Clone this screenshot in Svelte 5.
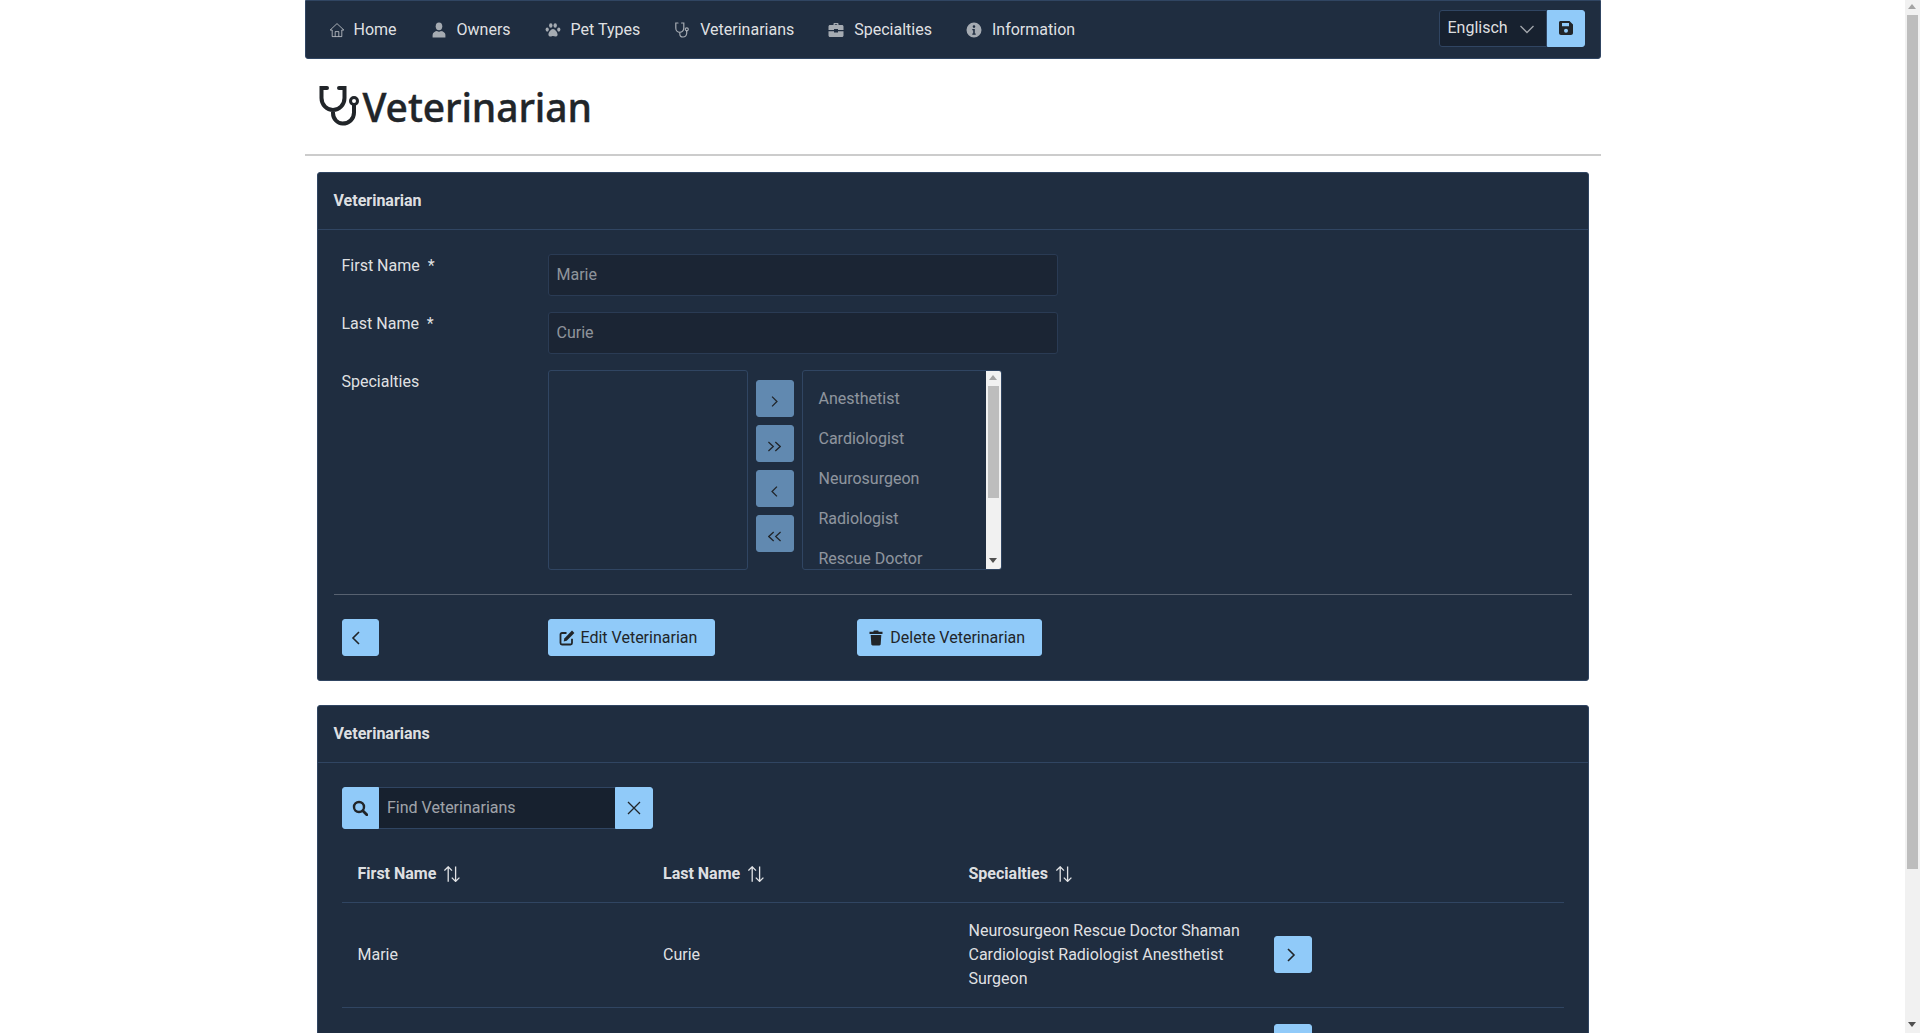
<script>
  const icons = {
    home: '<path d="M8 1.6 1.2 8h2v6.6h9.6V8h2z" fill="none" stroke="currentColor"/><path d="M6.2 14.4V9.6h3.6v4.8" fill="none" stroke="currentColor"/>',
    user: '<ellipse cx="8" cy="4.3" rx="3.3" ry="3.9" fill="currentColor"/><path d="M1.6 15.5v-2.6c0-2.2 2.6-3.6 4.4-3.8.6.5 1.2.7 2 .7s1.4-.2 2-.7c1.8.2 4.4 1.6 4.4 3.8v2.6z" fill="currentColor"/>',
    paw: '<g fill="currentColor"><ellipse cx="5.8" cy="3.5" rx="1.7" ry="2.3"/><ellipse cx="10.2" cy="3.5" rx="1.7" ry="2.3"/><ellipse cx="2.2" cy="7.6" rx="1.6" ry="2.1"/><ellipse cx="13.8" cy="7.6" rx="1.6" ry="2.1"/><path d="M8 7c2 0 4.600 3.400 4.600 5.600 0 1.400-1 2-2.100 2-1 0-1.600-.5-2.500-.5s-1.500.5-2.500.5c-1.100 0-2.100-.6-2.100-2C3.400 10.400 6 7 8 7z"/></g>',
    steth: '<path d="M4 1H1.800v5c0 2.500 1.800 4.400 4 4.400s4-1.900 4-4.400V1H7.600M5.800 10.400v1.300c0 1.900 1.500 3.300 3.200 3.300s3.400-1.400 3.700-3.500V9" fill="none" stroke="currentColor" stroke-width="1.200" stroke-linecap="round"/><circle cx="12.800" cy="7.300" r="1.500" fill="none" stroke="currentColor" stroke-width="1.200"/>',
    case: '<path fill="currentColor" d="M5.500 3V1.800c0-.5.400-.8.800-.8h3.400c.4 0 .8.300.8.800V3h3.500c.8 0 1.500.700 1.500 1.500V8H10V7H6v1H.5V4.500C.5 3.700 1.200 3 2 3zm1.300 0h2.400V2.300H6.800zM.5 9.200H6v1.300h4V9.200h5.500v4.300c0 .8-.7 1.500-1.500 1.500H2c-.8 0-1.500-.7-1.500-1.500z"/>',
    info: '<path fill="currentColor" fill-rule="evenodd" d="M8 .5a7.500 7.500 0 1 1 0 15 7.500 7.500 0 0 1 0-15zM8 3.300a1.300 1.300 0 1 0 0 2.600 1.300 1.300 0 0 0 0-2.600zM6.300 7v1.300h.9v3.300h-.9v1.200h3.400v-1.200h-.9V7z"/>',
    save: '<path fill="currentColor" fill-rule="evenodd" d="M2.500 1H11.500L15 4.500V13c0 1.100-.9 2-2 2H3c-1.100 0-2-.9-2-2V2.500C1 1.700 1.700 1 2.500 1zM4 3v3.200h7V3zM8 8.800a2 2 0 1 0 0 4 2 2 0 0 0 0-4z"/>',
    edit: '<path fill="none" stroke="currentColor" stroke-width="1.800" d="M7.500 3H3c-.9 0-1.500.6-1.500 1.500V13c0 .9.600 1.500 1.500 1.500h8.500c.9 0 1.500-.6 1.500-1.500V8.800"/><path fill="currentColor" d="M13 .6l2.400 2.400-7.700 7.800-3 .6.600-3z"/>',
    trash: '<path fill="currentColor" d="M5.800.4h4.400l.5 1.400H14.500v2.200h-13V1.800h3.800zM2.700 5h10.600l-.6 9.300c-.1.700-.6 1.200-1.300 1.200H4.600c-.7 0-1.200-.5-1.300-1.200z"/>',
    search: '<circle cx="7" cy="7" r="5" fill="none" stroke="currentColor" stroke-width="2.400"/><path d="M10.800 10.800l4 4" stroke="currentColor" stroke-width="2.800" stroke-linecap="round"/>',
    times: '<path d="M2 2l12 12M14 2 2 14" stroke="currentColor" stroke-width="1.300" fill="none"/>',
    sort: '<path d="M4.200 15.800V.8M.4 4.600 4.200.8 8 4.600M11.600.4v15M7.800 11.600l3.800 3.800 3.800-3.800" stroke="currentColor" stroke-width="1.300" fill="none"/>',
    down: '<path d="M1.500 5 8 11.500 14.500 5" stroke="currentColor" stroke-width="1.300" fill="none"/>',
    right: '<path d="M5 2l6 6-6 6" stroke="currentColor" stroke-width="1.600" fill="none"/>',
    left: '<path d="M11 2 5 8l6 6" stroke="currentColor" stroke-width="1.600" fill="none"/>',
    right2: '<path d="M.5 2.500l6 5.500-6 5.500M9 2.500l6 5.500-6 5.500" stroke="currentColor" stroke-width="1.600" fill="none"/>',
    left2: '<path d="M7 2.500 1 8l6 5.500M15.500 2.500 9.500 8l6 5.500" stroke="currentColor" stroke-width="1.600" fill="none"/>'
  };

  const navItems = [
    { icon: 'home', label: 'Home' },
    { icon: 'user', label: 'Owners' },
    { icon: 'paw', label: 'Pet Types' },
    { icon: 'steth', label: 'Veterinarians' },
    { icon: 'case', label: 'Specialties' },
    { icon: 'info', label: 'Information' }
  ];

  const specialties = ['Anesthetist', 'Cardiologist', 'Neurosurgeon', 'Radiologist', 'Rescue Doctor', 'Shaman', 'Surgeon'];
</script>

{#snippet icon(name, cls = '')}
  <svg class="icon {cls}" viewBox="0 0 16 16" aria-hidden="true">{@html icons[name]}</svg>
{/snippet}

{#snippet scrollbar(thumb)}
  <div class="scrollbar" aria-hidden="true">
    <span class="scrollbar__arrow scrollbar__arrow--up"></span>
    <span class="scrollbar__thumb" style="height: {thumb}px"></span>
    <span class="scrollbar__rest"></span>
    <span class="scrollbar__arrow scrollbar__arrow--down"></span>
  </div>
{/snippet}

<div class="shell">
  <div class="page">
    <nav class="menubar">
      <ul class="menu">
        {#each navItems as item}
          <li class="menu__item">
            {@render icon(item.icon)}
            <span>{item.label}</span>
          </li>
        {/each}
      </ul>
      <div class="lang">
        <div class="lang__select">
          <span>Englisch</span>
          {@render icon('down')}
        </div>
        <button class="btn lang__save" type="button">{@render icon('save')}</button>
      </div>
    </nav>

    <header class="title">
      <svg class="title__icon" viewBox="0 0 42 40" aria-hidden="true">
        <path d="M8 2H2.500v10c0 7 5.500 12 11.500 12s11.500-5 11.500-12V2H20M14 24v3c0 6 4.500 10.500 9.500 10.500 6.500 0 11.500-4.500 11.500-11V19" fill="none" stroke="currentColor" stroke-width="4" stroke-linecap="round"/>
        <circle cx="35" cy="15" r="3.500" fill="none" stroke="currentColor" stroke-width="3"/>
      </svg>
      <h1>Veterinarian</h1>
    </header>

    <section class="card">
      <h2 class="card__title">Veterinarian</h2>
      <div class="card__body">
        <div class="field">
          <label class="field__label" for="first">First Name&nbsp; *</label>
          <input id="first" class="input" value="Marie" disabled />
        </div>
        <div class="field">
          <label class="field__label" for="last">Last Name&nbsp; *</label>
          <input id="last" class="input" value="Curie" disabled />
        </div>
        <div class="field">
          <span class="field__label">Specialties</span>
          <div class="picklist">
            <div class="listbox"></div>
            <div class="picklist__btns">
              {#each ['right', 'right2', 'left', 'left2'] as dir}
                <button class="btn btn--disabled" type="button" disabled>{@render icon(dir, 'icon--small')}</button>
              {/each}
            </div>
            <div class="listbox listbox--scroll">
              <ul class="listbox__items">
                {#each specialties as name}
                  <li>{name}</li>
                {/each}
              </ul>
              {@render scrollbar(112)}
            </div>
          </div>
        </div>
        <hr class="divider" />
        <div class="actions">
          <div class="actions__back">
            <button class="btn btn--square btn--back" type="button">{@render icon('left')}</button>
          </div>
          <button class="btn btn--text" type="button">{@render icon('edit')}<span>Edit Veterinarian</span></button>
          <button class="btn btn--text actions__delete" type="button">{@render icon('trash')}<span>Delete Veterinarian</span></button>
        </div>
      </div>
    </section>

    <section class="card card--list">
      <h2 class="card__title">Veterinarians</h2>
      <div class="card__body card__body--list">
        <div class="search">
          <button class="btn search__btn" type="button">{@render icon('search')}</button>
          <input class="search__input" placeholder="Find Veterinarians" />
          <button class="btn search__btn search__btn--end" type="button">{@render icon('times')}</button>
        </div>
        <table class="table">
          <thead>
            <tr>
              <th><span class="th">First Name {@render icon('sort')}</span></th>
              <th><span class="th">Last Name {@render icon('sort')}</span></th>
              <th><span class="th">Specialties {@render icon('sort')}</span></th>
              <th></th>
            </tr>
          </thead>
          <tbody>
            <tr>
              <td>Marie</td>
              <td>Curie</td>
              <td>Neurosurgeon Rescue Doctor Shaman Cardiologist Radiologist Anesthetist Surgeon</td>
              <td><button class="btn btn--square btn--row" type="button">{@render icon('right')}</button></td>
            </tr>
            <tr>
              <td></td>
              <td></td>
              <td></td>
              <td><button class="btn btn--square btn--row" type="button">{@render icon('right')}</button></td>
            </tr>
          </tbody>
        </table>
      </div>
    </section>
  </div>
</div>

<!-- headless chrome hides real scrollbars, so the window's one is drawn -->
<div class="window-bar">{@render scrollbar(854)}</div>

<style>
  :global(body) {
    background: #fff;
    color: #212529;
    font-family: Roboto, "Liberation Sans", sans-serif;
    font-size: 16px;
  }

  .shell {
    width: 1905px;
  }

  .page {
    width: 1296px;
    margin: 0 auto;
    height: 1213px;
    overflow: hidden;
  }

  .window-bar {
    position: fixed;
    top: 0;
    right: 0;
    bottom: 0;
    width: 15px;
  }

  .scrollbar {
    display: flex;
    flex-direction: column;
    flex: none;
    width: 15px;
    height: 100%;
    background: #f1f1f1;
  }

  .scrollbar__arrow {
    flex: none;
    height: 15px;
    box-sizing: border-box;
    border: 4px solid transparent;
    border-top-width: 5px;
    border-bottom-width: 5px;
    position: relative;
  }

  .scrollbar__arrow::after {
    content: '';
    position: absolute;
    left: -1px;
    top: -1px;
    border-left: 4px solid transparent;
    border-right: 4px solid transparent;
  }

  .scrollbar__arrow--up::after {
    border-bottom: 5px solid #a3a3a3;
  }

  .scrollbar__arrow--down::after {
    border-top: 5px solid #505050;
  }

  .scrollbar__thumb {
    flex: none;
    margin: 0 2px;
    background: #bdbdbd;
  }

  .scrollbar__rest {
    flex: 1;
  }

  .icon {
    width: 16px;
    height: 16px;
    flex: none;
    display: block;
  }

  .icon--small {
    width: 13px;
    height: 13px;
    margin-top: 6px;
  }

  .menubar {
    display: flex;
    align-items: center;
    justify-content: space-between;
    box-sizing: border-box;
    height: 59px;
    padding: 8px 15px 8px 7px;
    background: #1f2d40;
    border: 1px solid #304562;
    border-radius: 0 0 3px 3px;
  }

  .menu {
    display: flex;
    gap: 3px;
    margin: 0;
    padding: 0;
    list-style: none;
  }

  .menu__item {
    display: flex;
    align-items: center;
    gap: 9px;
    padding: 12px 16px;
    color: rgba(255, 255, 255, 0.87);
    line-height: 19px;
  }

  .menu__item .icon {
    color: rgba(255, 255, 255, 0.6);
  }

  .menu__item:not(:first-child) .icon {
    margin: 0 1px 0 -1px;
  }

  .lang {
    display: flex;
    margin-top: -3px;
  }

  .lang__select {
    display: flex;
    align-items: center;
    justify-content: space-between;
    box-sizing: border-box;
    width: 108px;
    height: 37px;
    padding: 0 8px 2px 8px;
    background: #17212f;
    border: 1px solid #304562;
    border-radius: 3px 0 0 3px;
    color: rgba(255, 255, 255, 0.87);
  }

  .lang__select .icon {
    color: rgba(255, 255, 255, 0.6);
    margin: 3px 3px 0 0;
  }

  .btn {
    display: inline-flex;
    align-items: center;
    justify-content: center;
    box-sizing: border-box;
    height: 37px;
    padding: 0;
    background: #90caf9;
    color: #212529;
    border: 1px solid #90caf9;
    border-radius: 3px;
    font: inherit;
  }

  .lang__save {
    width: 38px;
    border-radius: 0 3px 3px 0;
  }

  .title {
    display: flex;
    align-items: flex-start;
    box-sizing: border-box;
    height: 97px;
    padding: 27px 0 0 14px;
    border-bottom: 2px solid #ccc;
    color: #212529;
  }

  .title__icon {
    width: 42px;
    height: 40px;
    flex: none;
  }

  h1 {
    margin: -1px 0 0 2px;
    font-family: "Noto Sans", sans-serif;
    font-size: 39px;
    font-weight: 500;
    line-height: 44px;
    letter-spacing: -0.1px;
    -webkit-text-stroke: 0.4px #212529;
  }

  .card {
    box-sizing: border-box;
    width: 1272px;
    margin: 16px 0 0 12px;
    background: #1f2d40;
    border: 1px solid #304562;
    border-radius: 3px;
    color: rgba(255, 255, 255, 0.87);
  }

  .card--list {
    margin-top: 24px;
  }

  .card__title {
    box-sizing: border-box;
    height: 57px;
    margin: 0;
    padding: 17px 16px;
    border-bottom: 1px solid #304562;
    font-size: 16px;
    font-weight: 700;
    line-height: 22px;
  }

  .card__body {
    padding: 24px 24px 24px;
  }

  .card__body--list {
    padding-bottom: 20px;
  }

  .field {
    display: flex;
    margin-bottom: 16px;
  }

  .field:nth-child(3) {
    margin-bottom: 0;
  }

  .field__label {
    width: 206px;
    flex: none;
    padding-top: 2px;
    line-height: 20px;
  }

  .input {
    box-sizing: border-box;
    width: 510px;
    height: 42px;
    padding: 0 8px 2px;
    background: #1b2534;
    border: 1px solid #2a3b54;
    border-radius: 3px;
    color: rgba(255, 255, 255, 0.52);
    font: inherit;
    outline: none;
  }

  .picklist {
    display: flex;
    gap: 8px;
  }

  .listbox {
    box-sizing: border-box;
    width: 200px;
    height: 200px;
    border: 1px solid #304562;
    border-radius: 3px;
    color: rgba(255, 255, 255, 0.5);
  }

  .listbox--scroll {
    display: flex;
    overflow: hidden;
  }

  .listbox__items {
    flex: 1;
    margin: 0;
    padding: 8px 0;
    list-style: none;
    overflow: hidden;
  }

  .listbox__items li {
    padding: 0 16px;
    height: 40px;
    line-height: 40px;
  }

  .picklist__btns {
    display: flex;
    flex-direction: column;
    gap: 8px;
    padding-top: 10px;
  }

  .btn--disabled {
    width: 38px;
    background: #6189b0;
    border-color: #6189b0;
  }

  .divider {
    margin: 24px -8px;
    border: 0;
    border-top: 1px solid rgba(255, 255, 255, 0.25);
  }

  .actions {
    display: flex;
  }

  .actions__back {
    width: 206px;
    flex: none;
  }

  .btn--square {
    width: 37.5px;
  }

  .btn--back .icon {
    margin-right: 8px;
  }

  .btn--row {
    display: flex;
    margin-bottom: 1px;
  }

  .btn--row .icon {
    margin-right: 4px;
  }

  .btn--text {
    gap: 6px;
    padding: 0 17px 0 10px;
  }

  .actions__delete {
    margin-left: 142px;
    padding-right: 16px;
  }

  .search {
    display: flex;
    width: 311px;
    height: 42px;
  }

  .search__btn {
    width: 37.5px;
    height: 42px;
    flex: none;
    border-radius: 3px 0 0 3px;
  }

  .search__btn--end {
    border-radius: 0 3px 3px 0;
  }

  .search__input {
    box-sizing: border-box;
    width: 236px;
    height: 42px;
    padding: 0 8px 2px;
    background: #17212f;
    border: 1px solid #304562;
    border-width: 1px 0;
    color: rgba(255, 255, 255, 0.87);
    font: inherit;
    outline: none;
  }

  .search__input::placeholder {
    color: rgba(255, 255, 255, 0.6);
    opacity: 1;
  }

  .table {
    width: 1222px;
    margin-top: 17px;
    border-collapse: collapse;
    table-layout: fixed;
  }

  th,
  td {
    padding: 16px;
    border-bottom: 1px solid #304562;
    line-height: 24px;
    text-align: left;
    font-weight: 400;
  }

  th {
    font-weight: 700;
  }

  .th {
    display: inline-flex;
    align-items: center;
    gap: 8px;
  }

  tbody tr:last-child td {
    border-bottom: 0;
  }
</style>
